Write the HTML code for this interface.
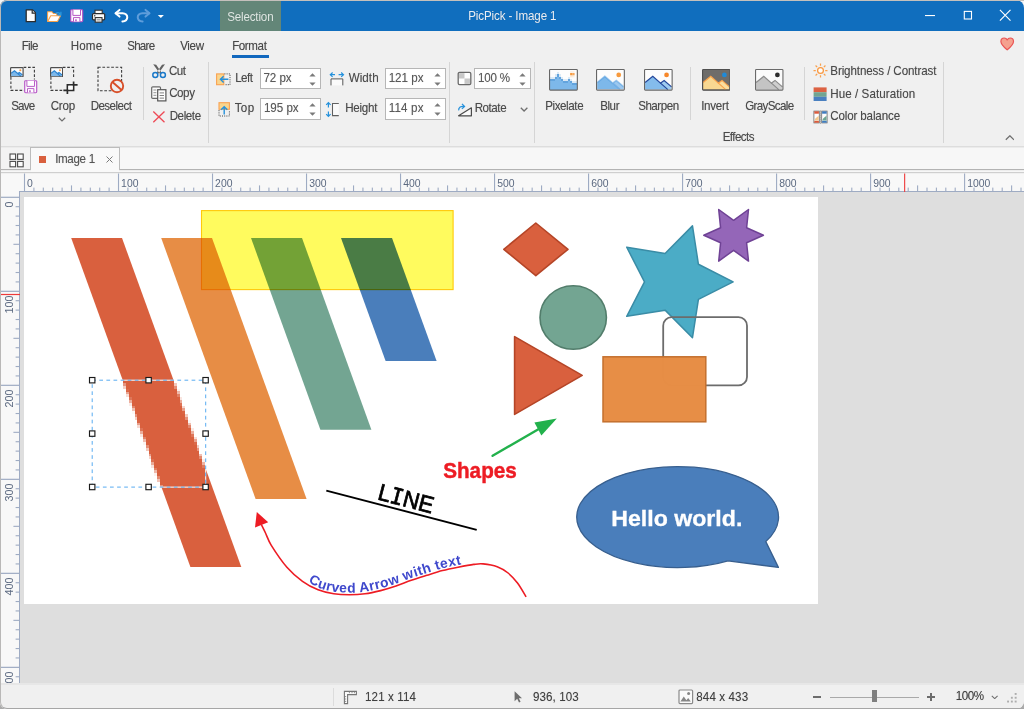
<!DOCTYPE html>
<html lang="en"><head><meta charset="utf-8"><title>PicPick - Image 1</title>
<style>
html,body{margin:0;padding:0}
body{width:1024px;height:709px;overflow:hidden;background:linear-gradient(#f6f6f6 0,#f6f6f6 50%,#ababab 50%,#ababab 100%);position:relative;font-family:"Liberation Sans",sans-serif}
#win{position:absolute;left:0;top:0;width:1024px;height:709px;overflow:hidden;border-radius:7px 8px 8px 7px;background:#f0f0f0}
#win>div,#win>svg,#win>span{position:absolute;display:block}
#win>span{white-space:pre;line-height:16px;text-shadow:0 0 0.7px rgba(80,80,80,0.45)}
#frame{position:absolute;left:0;top:0;width:1030px;height:707px;border:1px solid #b9b8b7;border-top-color:#c4c0bc;border-bottom-color:#a6a6a6;border-radius:7px;pointer-events:none}
</style></head>
<body>
<div id="win">
<div style="left:0px;top:0px;width:1024px;height:31px;background:#106ebe;"></div>
<div style="left:220px;top:1px;width:61px;height:30px;background:#638678;"></div>
<div style="left:0px;top:31px;width:1024px;height:116px;background:#f0f0f0;"></div>
<div style="left:232px;top:55px;width:37px;height:3px;background:#1268be;"></div>
<div style="left:208px;top:62px;width:1px;height:81px;background:#d5d5d5;"></div>
<div style="left:449px;top:62px;width:1px;height:81px;background:#d5d5d5;"></div>
<div style="left:533.6px;top:62px;width:1px;height:81px;background:#d5d5d5;"></div>
<div style="left:943px;top:62px;width:1px;height:81px;background:#d5d5d5;"></div>
<div style="left:143px;top:67px;width:1px;height:53px;background:#d5d5d5;"></div>
<div style="left:689.6px;top:67px;width:1px;height:53px;background:#d5d5d5;"></div>
<div style="left:804px;top:67px;width:1px;height:53px;background:#d5d5d5;"></div>
<div style="left:260.2px;top:67.9px;width:60.4px;height:21.6px;background:#fff;border:1px solid #b6b6b6;box-sizing:border-box;"></div>
<svg style="left:307.99999999999994px;top:71.5px;" width="9" height="15" viewBox="0 0 9 15"><path d="M1.4 4.4 L4.5 1.3 L7.6 4.4 Z M1.4 10.6 L4.5 13.7 L7.6 10.6 Z" fill="#7a7a7a"/></svg>
<div style="left:260.2px;top:98.2px;width:60.4px;height:21.6px;background:#fff;border:1px solid #b6b6b6;box-sizing:border-box;"></div>
<svg style="left:307.99999999999994px;top:101.8px;" width="9" height="15" viewBox="0 0 9 15"><path d="M1.4 4.4 L4.5 1.3 L7.6 4.4 Z M1.4 10.6 L4.5 13.7 L7.6 10.6 Z" fill="#7a7a7a"/></svg>
<div style="left:385.2px;top:67.9px;width:60.6px;height:21.6px;background:#fff;border:1px solid #b6b6b6;box-sizing:border-box;"></div>
<svg style="left:433.2px;top:71.5px;" width="9" height="15" viewBox="0 0 9 15"><path d="M1.4 4.4 L4.5 1.3 L7.6 4.4 Z M1.4 10.6 L4.5 13.7 L7.6 10.6 Z" fill="#7a7a7a"/></svg>
<div style="left:385.2px;top:98.2px;width:60.6px;height:21.6px;background:#fff;border:1px solid #b6b6b6;box-sizing:border-box;"></div>
<svg style="left:433.2px;top:101.8px;" width="9" height="15" viewBox="0 0 9 15"><path d="M1.4 4.4 L4.5 1.3 L7.6 4.4 Z M1.4 10.6 L4.5 13.7 L7.6 10.6 Z" fill="#7a7a7a"/></svg>
<div style="left:474.4px;top:67.9px;width:56.3px;height:21.6px;background:#fff;border:1px solid #b6b6b6;box-sizing:border-box;"></div>
<svg style="left:518.0999999999999px;top:71.5px;" width="9" height="15" viewBox="0 0 9 15"><path d="M1.4 4.4 L4.5 1.3 L7.6 4.4 Z M1.4 10.6 L4.5 13.7 L7.6 10.6 Z" fill="#7a7a7a"/></svg>
<div style="left:0px;top:146px;width:1024px;height:1px;background:#dddddd;"></div>
<div style="left:0px;top:147px;width:1024px;height:26px;background:#f7f7f7;"></div>
<div style="left:0px;top:147px;width:1024px;height:1px;background:#ebebeb;"></div>
<div style="left:0px;top:169px;width:1024px;height:1px;background:#b3b3b3;"></div>
<div style="left:0px;top:170px;width:1024px;height:1px;background:#ededed;"></div>
<div style="left:0px;top:172px;width:1024px;height:1px;background:#cfcfcf;"></div>
<div style="left:1px;top:148px;width:29px;height:21px;background:#f3f3f3;"></div>
<div style="left:30px;top:147px;width:90px;height:23px;background:#f9f9f9;border:1px solid #bcbcbc;border-bottom:none;box-sizing:border-box;"></div>
<div style="left:31px;top:169px;width:88px;height:3px;background:#f9f9f9;"></div>
<div style="left:39.2px;top:155.7px;width:6.8px;height:6.9px;background:#d9603e;"></div>
<svg style="left:105px;top:155px;" width="9" height="9" viewBox="0 0 9 9"><path d="M1.5 1.5 L7.5 7.5 M7.5 1.5 L1.5 7.5" stroke="#7a7a7a" stroke-width="1" fill="none"/></svg>
<div style="left:0px;top:173.5px;width:1024px;height:511px;background:#dedede;"></div>
<div style="left:0px;top:173.5px;width:1024px;height:18.5px;background:#f8f8f8;"></div>
<div style="left:19.2px;top:190.9px;width:1005px;height:1.6px;background:#9eabc3;"></div>
<div style="left:0px;top:192px;width:20px;height:492px;background:#f8f8f8;"></div>
<div style="left:19.1px;top:192px;width:1.2px;height:492px;background:#9eabc3;"></div>
<svg style="left:0px;top:173px;" width="1024" height="20" viewBox="0 0 1024 20"><rect x="23.95" y="0.5" width="1.1" height="18.5" fill="#9eabc3"/><rect x="33.35" y="14.6" width="1.1" height="4" fill="#9eabc3"/><rect x="42.75" y="14.6" width="1.1" height="4" fill="#9eabc3"/><rect x="52.15" y="14.6" width="1.1" height="4" fill="#9eabc3"/><rect x="61.55" y="14.6" width="1.1" height="4" fill="#9eabc3"/><rect x="70.95" y="12.4" width="1.1" height="6" fill="#9eabc3"/><rect x="80.36" y="14.6" width="1.1" height="4" fill="#9eabc3"/><rect x="89.76" y="14.6" width="1.1" height="4" fill="#9eabc3"/><rect x="99.16" y="14.6" width="1.1" height="4" fill="#9eabc3"/><rect x="108.56" y="14.6" width="1.1" height="4" fill="#9eabc3"/><rect x="117.96" y="0.5" width="1.1" height="18.5" fill="#9eabc3"/><rect x="127.36" y="14.6" width="1.1" height="4" fill="#9eabc3"/><rect x="136.76" y="14.6" width="1.1" height="4" fill="#9eabc3"/><rect x="146.16" y="14.6" width="1.1" height="4" fill="#9eabc3"/><rect x="155.56" y="14.6" width="1.1" height="4" fill="#9eabc3"/><rect x="164.97" y="12.4" width="1.1" height="6" fill="#9eabc3"/><rect x="174.37" y="14.6" width="1.1" height="4" fill="#9eabc3"/><rect x="183.77" y="14.6" width="1.1" height="4" fill="#9eabc3"/><rect x="193.17" y="14.6" width="1.1" height="4" fill="#9eabc3"/><rect x="202.57" y="14.6" width="1.1" height="4" fill="#9eabc3"/><rect x="211.97" y="0.5" width="1.1" height="18.5" fill="#9eabc3"/><rect x="221.37" y="14.6" width="1.1" height="4" fill="#9eabc3"/><rect x="230.77" y="14.6" width="1.1" height="4" fill="#9eabc3"/><rect x="240.17" y="14.6" width="1.1" height="4" fill="#9eabc3"/><rect x="249.57" y="14.6" width="1.1" height="4" fill="#9eabc3"/><rect x="258.97" y="12.4" width="1.1" height="6" fill="#9eabc3"/><rect x="268.38" y="14.6" width="1.1" height="4" fill="#9eabc3"/><rect x="277.78" y="14.6" width="1.1" height="4" fill="#9eabc3"/><rect x="287.18" y="14.6" width="1.1" height="4" fill="#9eabc3"/><rect x="296.58" y="14.6" width="1.1" height="4" fill="#9eabc3"/><rect x="305.98" y="0.5" width="1.1" height="18.5" fill="#9eabc3"/><rect x="315.38" y="14.6" width="1.1" height="4" fill="#9eabc3"/><rect x="324.78" y="14.6" width="1.1" height="4" fill="#9eabc3"/><rect x="334.18" y="14.6" width="1.1" height="4" fill="#9eabc3"/><rect x="343.58" y="14.6" width="1.1" height="4" fill="#9eabc3"/><rect x="352.99" y="12.4" width="1.1" height="6" fill="#9eabc3"/><rect x="362.39" y="14.6" width="1.1" height="4" fill="#9eabc3"/><rect x="371.79" y="14.6" width="1.1" height="4" fill="#9eabc3"/><rect x="381.19" y="14.6" width="1.1" height="4" fill="#9eabc3"/><rect x="390.59" y="14.6" width="1.1" height="4" fill="#9eabc3"/><rect x="399.99" y="0.5" width="1.1" height="18.5" fill="#9eabc3"/><rect x="409.39" y="14.6" width="1.1" height="4" fill="#9eabc3"/><rect x="418.79" y="14.6" width="1.1" height="4" fill="#9eabc3"/><rect x="428.19" y="14.6" width="1.1" height="4" fill="#9eabc3"/><rect x="437.59" y="14.6" width="1.1" height="4" fill="#9eabc3"/><rect x="447.00" y="12.4" width="1.1" height="6" fill="#9eabc3"/><rect x="456.40" y="14.6" width="1.1" height="4" fill="#9eabc3"/><rect x="465.80" y="14.6" width="1.1" height="4" fill="#9eabc3"/><rect x="475.20" y="14.6" width="1.1" height="4" fill="#9eabc3"/><rect x="484.60" y="14.6" width="1.1" height="4" fill="#9eabc3"/><rect x="494.00" y="0.5" width="1.1" height="18.5" fill="#9eabc3"/><rect x="503.40" y="14.6" width="1.1" height="4" fill="#9eabc3"/><rect x="512.80" y="14.6" width="1.1" height="4" fill="#9eabc3"/><rect x="522.20" y="14.6" width="1.1" height="4" fill="#9eabc3"/><rect x="531.60" y="14.6" width="1.1" height="4" fill="#9eabc3"/><rect x="541.01" y="12.4" width="1.1" height="6" fill="#9eabc3"/><rect x="550.41" y="14.6" width="1.1" height="4" fill="#9eabc3"/><rect x="559.81" y="14.6" width="1.1" height="4" fill="#9eabc3"/><rect x="569.21" y="14.6" width="1.1" height="4" fill="#9eabc3"/><rect x="578.61" y="14.6" width="1.1" height="4" fill="#9eabc3"/><rect x="588.01" y="0.5" width="1.1" height="18.5" fill="#9eabc3"/><rect x="597.41" y="14.6" width="1.1" height="4" fill="#9eabc3"/><rect x="606.81" y="14.6" width="1.1" height="4" fill="#9eabc3"/><rect x="616.21" y="14.6" width="1.1" height="4" fill="#9eabc3"/><rect x="625.61" y="14.6" width="1.1" height="4" fill="#9eabc3"/><rect x="635.02" y="12.4" width="1.1" height="6" fill="#9eabc3"/><rect x="644.42" y="14.6" width="1.1" height="4" fill="#9eabc3"/><rect x="653.82" y="14.6" width="1.1" height="4" fill="#9eabc3"/><rect x="663.22" y="14.6" width="1.1" height="4" fill="#9eabc3"/><rect x="672.62" y="14.6" width="1.1" height="4" fill="#9eabc3"/><rect x="682.02" y="0.5" width="1.1" height="18.5" fill="#9eabc3"/><rect x="691.42" y="14.6" width="1.1" height="4" fill="#9eabc3"/><rect x="700.82" y="14.6" width="1.1" height="4" fill="#9eabc3"/><rect x="710.22" y="14.6" width="1.1" height="4" fill="#9eabc3"/><rect x="719.62" y="14.6" width="1.1" height="4" fill="#9eabc3"/><rect x="729.03" y="12.4" width="1.1" height="6" fill="#9eabc3"/><rect x="738.43" y="14.6" width="1.1" height="4" fill="#9eabc3"/><rect x="747.83" y="14.6" width="1.1" height="4" fill="#9eabc3"/><rect x="757.23" y="14.6" width="1.1" height="4" fill="#9eabc3"/><rect x="766.63" y="14.6" width="1.1" height="4" fill="#9eabc3"/><rect x="776.03" y="0.5" width="1.1" height="18.5" fill="#9eabc3"/><rect x="785.43" y="14.6" width="1.1" height="4" fill="#9eabc3"/><rect x="794.83" y="14.6" width="1.1" height="4" fill="#9eabc3"/><rect x="804.23" y="14.6" width="1.1" height="4" fill="#9eabc3"/><rect x="813.63" y="14.6" width="1.1" height="4" fill="#9eabc3"/><rect x="823.04" y="12.4" width="1.1" height="6" fill="#9eabc3"/><rect x="832.44" y="14.6" width="1.1" height="4" fill="#9eabc3"/><rect x="841.84" y="14.6" width="1.1" height="4" fill="#9eabc3"/><rect x="851.24" y="14.6" width="1.1" height="4" fill="#9eabc3"/><rect x="860.64" y="14.6" width="1.1" height="4" fill="#9eabc3"/><rect x="870.04" y="0.5" width="1.1" height="18.5" fill="#9eabc3"/><rect x="879.44" y="14.6" width="1.1" height="4" fill="#9eabc3"/><rect x="888.84" y="14.6" width="1.1" height="4" fill="#9eabc3"/><rect x="898.24" y="14.6" width="1.1" height="4" fill="#9eabc3"/><rect x="907.64" y="14.6" width="1.1" height="4" fill="#9eabc3"/><rect x="917.05" y="12.4" width="1.1" height="6" fill="#9eabc3"/><rect x="926.45" y="14.6" width="1.1" height="4" fill="#9eabc3"/><rect x="935.85" y="14.6" width="1.1" height="4" fill="#9eabc3"/><rect x="945.25" y="14.6" width="1.1" height="4" fill="#9eabc3"/><rect x="954.65" y="14.6" width="1.1" height="4" fill="#9eabc3"/><rect x="964.05" y="0.5" width="1.1" height="18.5" fill="#9eabc3"/><rect x="973.45" y="14.6" width="1.1" height="4" fill="#9eabc3"/><rect x="982.85" y="14.6" width="1.1" height="4" fill="#9eabc3"/><rect x="992.25" y="14.6" width="1.1" height="4" fill="#9eabc3"/><rect x="1001.65" y="14.6" width="1.1" height="4" fill="#9eabc3"/><rect x="1011.06" y="12.4" width="1.1" height="6" fill="#9eabc3"/><rect x="1020.46" y="14.6" width="1.1" height="4" fill="#9eabc3"/><g font-family="Liberation Sans, sans-serif" font-size="10.4" fill="#5b6980"><text x="27.10" y="13.6">0</text><text x="121.11" y="13.6">100</text><text x="215.12" y="13.6">200</text><text x="309.13" y="13.6">300</text><text x="403.14" y="13.6">400</text><text x="497.15" y="13.6">500</text><text x="591.16" y="13.6">600</text><text x="685.17" y="13.6">700</text><text x="779.18" y="13.6">800</text><text x="873.19" y="13.6">900</text><text x="967.20" y="13.6">1000</text></g><rect x="904.1" y="0.5" width="1.1" height="18.5" fill="#ee3a3a"/></svg>
<svg style="left:0px;top:192px;" width="20" height="492" viewBox="0 0 20 492"><rect x="1" y="4.70" width="19" height="1.2" fill="#9eabc3"/><rect x="15.6" y="14.15" width="4" height="1.1" fill="#9eabc3"/><rect x="15.6" y="23.55" width="4" height="1.1" fill="#9eabc3"/><rect x="15.6" y="32.95" width="4" height="1.1" fill="#9eabc3"/><rect x="15.6" y="42.35" width="4" height="1.1" fill="#9eabc3"/><rect x="13.4" y="51.76" width="6" height="1.1" fill="#9eabc3"/><rect x="15.6" y="61.16" width="4" height="1.1" fill="#9eabc3"/><rect x="15.6" y="70.56" width="4" height="1.1" fill="#9eabc3"/><rect x="15.6" y="79.96" width="4" height="1.1" fill="#9eabc3"/><rect x="15.6" y="89.36" width="4" height="1.1" fill="#9eabc3"/><rect x="1" y="98.71" width="19" height="1.2" fill="#9eabc3"/><rect x="15.6" y="108.16" width="4" height="1.1" fill="#9eabc3"/><rect x="15.6" y="117.56" width="4" height="1.1" fill="#9eabc3"/><rect x="15.6" y="126.96" width="4" height="1.1" fill="#9eabc3"/><rect x="15.6" y="136.36" width="4" height="1.1" fill="#9eabc3"/><rect x="13.4" y="145.77" width="6" height="1.1" fill="#9eabc3"/><rect x="15.6" y="155.17" width="4" height="1.1" fill="#9eabc3"/><rect x="15.6" y="164.57" width="4" height="1.1" fill="#9eabc3"/><rect x="15.6" y="173.97" width="4" height="1.1" fill="#9eabc3"/><rect x="15.6" y="183.37" width="4" height="1.1" fill="#9eabc3"/><rect x="1" y="192.72" width="19" height="1.2" fill="#9eabc3"/><rect x="15.6" y="202.17" width="4" height="1.1" fill="#9eabc3"/><rect x="15.6" y="211.57" width="4" height="1.1" fill="#9eabc3"/><rect x="15.6" y="220.97" width="4" height="1.1" fill="#9eabc3"/><rect x="15.6" y="230.37" width="4" height="1.1" fill="#9eabc3"/><rect x="13.4" y="239.78" width="6" height="1.1" fill="#9eabc3"/><rect x="15.6" y="249.18" width="4" height="1.1" fill="#9eabc3"/><rect x="15.6" y="258.58" width="4" height="1.1" fill="#9eabc3"/><rect x="15.6" y="267.98" width="4" height="1.1" fill="#9eabc3"/><rect x="15.6" y="277.38" width="4" height="1.1" fill="#9eabc3"/><rect x="1" y="286.73" width="19" height="1.2" fill="#9eabc3"/><rect x="15.6" y="296.18" width="4" height="1.1" fill="#9eabc3"/><rect x="15.6" y="305.58" width="4" height="1.1" fill="#9eabc3"/><rect x="15.6" y="314.98" width="4" height="1.1" fill="#9eabc3"/><rect x="15.6" y="324.38" width="4" height="1.1" fill="#9eabc3"/><rect x="13.4" y="333.79" width="6" height="1.1" fill="#9eabc3"/><rect x="15.6" y="343.19" width="4" height="1.1" fill="#9eabc3"/><rect x="15.6" y="352.59" width="4" height="1.1" fill="#9eabc3"/><rect x="15.6" y="361.99" width="4" height="1.1" fill="#9eabc3"/><rect x="15.6" y="371.39" width="4" height="1.1" fill="#9eabc3"/><rect x="1" y="380.74" width="19" height="1.2" fill="#9eabc3"/><rect x="15.6" y="390.19" width="4" height="1.1" fill="#9eabc3"/><rect x="15.6" y="399.59" width="4" height="1.1" fill="#9eabc3"/><rect x="15.6" y="408.99" width="4" height="1.1" fill="#9eabc3"/><rect x="15.6" y="418.39" width="4" height="1.1" fill="#9eabc3"/><rect x="13.4" y="427.80" width="6" height="1.1" fill="#9eabc3"/><rect x="15.6" y="437.20" width="4" height="1.1" fill="#9eabc3"/><rect x="15.6" y="446.60" width="4" height="1.1" fill="#9eabc3"/><rect x="15.6" y="456.00" width="4" height="1.1" fill="#9eabc3"/><rect x="15.6" y="465.40" width="4" height="1.1" fill="#9eabc3"/><rect x="1" y="474.75" width="19" height="1.2" fill="#9eabc3"/><rect x="15.6" y="484.20" width="4" height="1.1" fill="#9eabc3"/><g font-family="Liberation Sans, sans-serif" font-size="10.8" fill="#5b6980"><text transform="translate(13.2,9.40) rotate(-90)" text-anchor="end">0</text><text transform="translate(13.2,103.41) rotate(-90)" text-anchor="end">100</text><text transform="translate(13.2,197.42) rotate(-90)" text-anchor="end">200</text><text transform="translate(13.2,291.43) rotate(-90)" text-anchor="end">300</text><text transform="translate(13.2,385.44) rotate(-90)" text-anchor="end">400</text><text transform="translate(13.2,479.45) rotate(-90)" text-anchor="end">500</text></g><rect x="1" y="101.9" width="19" height="1.2" fill="#ee3a3a"/></svg>
<svg style="left:24px;top:8px;" width="14" height="16" viewBox="0 0 14 16"><path d="M2.2 1.9 H8.6 L11.4 4.8 V13.7 H2.2 Z" fill="#fcfcfc" stroke="#2d2d2d" stroke-width="1.3" stroke-linejoin="round"/><path d="M8.2 1.9 V5.2 H11.4" fill="#e8e8e8" stroke="#2d2d2d" stroke-width="1.2"/></svg>
<svg style="left:46px;top:9px;" width="17" height="15" viewBox="0 0 17 15"><path d="M1.6 12.5 V2.7 H5.8 L7.4 4.5 H10.8 V6.8" fill="#fffdfb" stroke="#f7a047" stroke-width="1.05" stroke-linejoin="round"/><path d="M1.7 12.5 L4.7 6.8 H14.5 L11.5 12.5 Z" fill="#fffefd" stroke="#f7a047" stroke-width="1.05" stroke-linejoin="round"/><path d="M9.6 4.7 C10.8 3.2 13.2 3.2 14.3 5.3" fill="none" stroke="#2d9be0" stroke-width="1.3"/><path d="M14.9 2.7 V5.9 H11.9" fill="none" stroke="#2d9be0" stroke-width="1.2"/></svg>
<svg style="left:69.6px;top:9.2px;" width="14.0" height="14.0" viewBox="0 0 14 14"><rect x="0.7" y="0.7" width="12" height="12" rx="0.9" fill="#fdf8fd" stroke="#b24fc2" stroke-width="1.15"/><path d="M2.9 0.8 V6.4 H10.5 V0.8" fill="#ffffff" stroke="#b24fc2" stroke-width="0.95"/><path d="M3.5 12.6 V8.6 H9.9 V12.6" fill="#ffffff" stroke="#b24fc2" stroke-width="0.95"/><rect x="5.2" y="10.3" width="1.5" height="2" fill="#b24fc2"/></svg>
<svg style="left:91px;top:9px;" width="16" height="15" viewBox="0 0 16 15"><rect x="4" y="1.2" width="7.2" height="4" fill="#fafafa" stroke="#333" stroke-width="1.1"/><rect x="1.5" y="4.6" width="12.2" height="6.2" rx="1" fill="#fcfcfc" stroke="#2e2e2e" stroke-width="1.2"/><rect x="4.2" y="8.6" width="6.8" height="4.6" fill="#f3f3f3" stroke="#333" stroke-width="1.1"/><rect x="5.6" y="10.2" width="4" height="0.9" fill="#999"/><rect x="5.6" y="11.6" width="4" height="0.8" fill="#999"/><rect x="3" y="6.2" width="1.4" height="1.2" fill="#333"/></svg>
<svg style="left:113px;top:8px;" width="17" height="17" viewBox="0 0 17 17"><path d="M6.5 1.9 L2.5 5.2 L6.5 8.6" fill="none" stroke="#fff" stroke-width="2" stroke-linecap="round" stroke-linejoin="round"/><path d="M2.8 5.2 H9.6 C15.8 5.2 15.9 13 9.4 13.5" fill="none" stroke="#fff" stroke-width="2" stroke-linecap="round"/></svg>
<svg style="left:134.8px;top:8px;" width="17" height="17" viewBox="0 0 17 17"><path d="M10.5 1.9 L14.5 5.2 L10.5 8.6" fill="none" stroke="#5e9ddb" stroke-width="2" stroke-linecap="round" stroke-linejoin="round"/><path d="M14.2 5.2 H7.4 C1.2 5.2 1.1 13 7.6 13.5" fill="none" stroke="#5e9ddb" stroke-width="2" stroke-linecap="round"/></svg>
<svg style="left:157px;top:14px;" width="8" height="5" viewBox="0 0 8 5"><path d="M0.8 0.9 H6.9 L3.85 3.9 Z" fill="#fff"/></svg>
<svg style="left:924px;top:14px;" width="12" height="3" viewBox="0 0 12 3"><rect x="1" y="1" width="10" height="1.1" fill="#fff"/></svg>
<svg style="left:962px;top:9px;" width="12" height="12" viewBox="0 0 12 12"><rect x="2.3" y="2.4" width="7.2" height="7.6" fill="none" stroke="#fff" stroke-width="1.1"/></svg>
<svg style="left:998px;top:8px;" width="14" height="14" viewBox="0 0 14 14"><path d="M1.9 1.8 L12.5 12.6 M12.5 1.8 L1.9 12.6" fill="none" stroke="#fff" stroke-width="1.15"/></svg>
<svg style="left:999px;top:36px;" width="17" height="16" viewBox="0 0 17 16"><path d="M8.2 13.9 C5.4 11.6 1.9 8.9 1.9 5.6 C1.9 3.4 3.4 2 5.2 2 C6.6 2 7.7 2.8 8.2 4 C8.7 2.8 9.8 2 11.2 2 C13 2 14.5 3.4 14.5 5.6 C14.5 8.9 11 11.6 8.2 13.9 Z" fill="#f5a18f" stroke="#ea5656" stroke-width="1.2" stroke-linejoin="round"/></svg>
<svg style="left:9px;top:65px;" width="30" height="30" viewBox="0 0 30 30"><path d="M14.6 2.4 H25.4 V14.6" fill="none" stroke="#3c3c3c" stroke-width="1.1" stroke-dasharray="2.7 1.7"/><path d="M1.9 12 V25.4 H15.4" fill="none" stroke="#3c3c3c" stroke-width="1.1" stroke-dasharray="2.7 1.7"/></svg>
<svg style="left:10px;top:66.7px;" width="13.7" height="10.4" viewBox="0 0 13.7 10.4"><rect x="0.6" y="0.6" width="12.5" height="9.200000000000001" rx="0.8" fill="#fdfdfd"/><g><path d="M1.20 6.32 L4.48 3.76 L10.92 9.20 L1.20 9.20 Z" fill="#7db8ea"/><path d="M7.53 6.72 L9.34 5.44 L12.50 8.08 L12.50 9.20 L10.47 9.20 Z" fill="#9cc8ef"/><path d="M1.20 6.32 L4.48 3.76 L10.92 9.20 M7.53 6.72 L9.34 5.44 L12.50 8.08" fill="none" stroke="#2f86d2" stroke-width="1.2" opacity="1"/><circle cx="10.35" cy="3.20" r="1.02" fill="#f79a3e"/></g><rect x="0.6" y="0.6" width="12.5" height="9.200000000000001" rx="0.8" fill="none" stroke="#4f4f4f" stroke-width="1.2"/></svg>
<svg style="left:24.3px;top:80.4px;" width="14.0" height="14.0" viewBox="0 0 14 14"><rect x="0.7" y="0.7" width="12" height="12" rx="0.9" fill="#fdf8fd" stroke="#b657c6" stroke-width="1.15"/><path d="M2.9 0.8 V6.4 H10.5 V0.8" fill="#ffffff" stroke="#b657c6" stroke-width="0.95"/><path d="M3.5 12.6 V8.6 H9.9 V12.6" fill="#ffffff" stroke="#b657c6" stroke-width="0.95"/><rect x="5.2" y="10.3" width="1.5" height="2" fill="#b657c6"/></svg>
<svg style="left:49px;top:65px;" width="30" height="31" viewBox="0 0 30 31"><path d="M13.8 2.4 H24.6 V13.6" fill="none" stroke="#3c3c3c" stroke-width="1.1" stroke-dasharray="2.7 1.7"/><path d="M1.9 12 V25.4 H15" fill="none" stroke="#3c3c3c" stroke-width="1.1" stroke-dasharray="2.7 1.7"/><path d="M14.4 25.4 H24.6 V16.6 M18.4 29 V19.8 H28.6" fill="none" stroke="#2c2c2c" stroke-width="1.7"/><rect x="19.3" y="20.7" width="4.4" height="3.9" fill="#fdfdfd"/></svg>
<svg style="left:49.8px;top:66.7px;" width="13.2" height="10.4" viewBox="0 0 13.2 10.4"><rect x="0.6" y="0.6" width="12.0" height="9.200000000000001" rx="0.8" fill="#fdfdfd"/><g><path d="M1.20 6.32 L4.33 3.76 L10.49 9.20 L1.20 9.20 Z" fill="#7db8ea"/><path d="M7.25 6.72 L8.98 5.44 L12.00 8.08 L12.00 9.20 L10.06 9.20 Z" fill="#9cc8ef"/><path d="M1.20 6.32 L4.33 3.76 L10.49 9.20 M7.25 6.72 L8.98 5.44 L12.00 8.08" fill="none" stroke="#2f86d2" stroke-width="1.2" opacity="1"/><circle cx="9.95" cy="3.20" r="0.97" fill="#f79a3e"/></g><rect x="0.6" y="0.6" width="12.0" height="9.200000000000001" rx="0.8" fill="none" stroke="#4f4f4f" stroke-width="1.2"/></svg>
<svg style="left:96px;top:65px;" width="30" height="30" viewBox="0 0 30 30"><rect x="2" y="2.3" width="23.6" height="23.4" fill="none" stroke="#3c3c3c" stroke-width="1.1" stroke-dasharray="2.7 1.7"/><circle cx="21" cy="21" r="6.2" fill="#f0f0f0" stroke="#d8502a" stroke-width="1.9"/><path d="M16.7 17.2 L25.3 24.8" stroke="#d8502a" stroke-width="1.9"/></svg>
<svg style="left:57.7px;top:116.9px;" width="8.0" height="4.9" viewBox="0 0 8.0 4.9"><path d="M0.8 0.8 L4.0 3.9 L7.2 0.8" fill="none" stroke="#6f6f6f" stroke-width="1.3"/></svg>
<svg style="left:520.2px;top:106.5px;" width="8.2" height="5.0" viewBox="0 0 8.2 5.0"><path d="M0.8 0.8 L4.1 4.0 L7.3999999999999995 0.8" fill="none" stroke="#6f6f6f" stroke-width="1.3"/></svg>
<svg style="left:1004.6px;top:135.2px;" width="9.799999999999999" height="5.800000000000001" viewBox="0 0 9.799999999999999 5.800000000000001"><path d="M0.8 4.8 L4.8999999999999995 0.8 L9.0 4.8" fill="none" stroke="#6f6f6f" stroke-width="1.3"/></svg>
<svg style="left:151px;top:63px;" width="16" height="16" viewBox="0 0 16 16"><path d="M2.2 1.2 L5.2 1.8 L10.5 9.5 L8.9 10.7 Z M14 1.2 L11 1.8 L5.7 9.5 L7.3 10.7 Z" fill="#626262"/><circle cx="4.3" cy="11.9" r="2.5" fill="#f0f0f0" stroke="#1b79c9" stroke-width="1.5"/><circle cx="11.9" cy="11.9" r="2.5" fill="#f0f0f0" stroke="#1b79c9" stroke-width="1.5"/></svg>
<svg style="left:150px;top:85px;" width="18" height="18" viewBox="0 0 18 18"><rect x="1.7" y="1.8" width="8.8" height="11.6" rx="1" fill="#fbfbfb" stroke="#696969" stroke-width="1.2"/><path d="M3.4 5 H6.4 M3.4 7.7 H6.4 M3.4 10.3 H6.4" stroke="#8a8a8a" stroke-width="0.9"/><rect x="7.7" y="4.7" width="8.2" height="11.2" fill="#fdfdfd" stroke="#555" stroke-width="1.2"/><path d="M9.6 7.9 H14 M9.6 10.5 H14 M9.6 13.1 H14" stroke="#808080" stroke-width="1"/></svg>
<svg style="left:152px;top:109.5px;" width="14" height="14" viewBox="0 0 14 14"><path d="M1.3 1.5 L12.5 12.3 M12.5 1.5 L1.3 12.3" fill="none" stroke="#ee4b57" stroke-width="1.35"/></svg>
<svg style="left:215px;top:71.5px;" width="17" height="15" viewBox="0 0 17 15"><rect x="1.6" y="1.9" width="7.2" height="10.8" fill="#f9d58d" stroke="#f9a252" stroke-width="1.1"/><path d="M9.4 1.9 H15 V12.7 H9.4" fill="none" stroke="#444" stroke-width="1" stroke-dasharray="1 1.2"/><path d="M13.4 7.3 H5.6 M8.6 4.2 L5.4 7.3 L8.6 10.4" fill="none" stroke="#2591dc" stroke-width="1.4"/></svg>
<svg style="left:216.5px;top:101px;" width="15" height="17" viewBox="0 0 15 17"><rect x="2" y="1.7" width="10.4" height="6.6" fill="#f9d58d" stroke="#f9a252" stroke-width="1.1"/><path d="M2 9.2 V15 H12.4 V9.2" fill="none" stroke="#444" stroke-width="1" stroke-dasharray="1 1.2"/><path d="M7.2 13.4 V6 M4.1 8.8 L7.2 5.7 L10.3 8.8" fill="none" stroke="#2591dc" stroke-width="1.4"/></svg>
<svg style="left:328.5px;top:71px;" width="16" height="16" viewBox="0 0 16 16"><path d="M1.4 3.7 H6 M3.6 1.5 L1.3 3.7 L3.6 5.9 M9.6 3.7 H14.4 M12.2 1.5 L14.5 3.7 L12.2 5.9" fill="none" stroke="#2591dc" stroke-width="1.2"/><path d="M2 14.4 V7.9 H13.8 V14.4" fill="#fafafa" stroke="#585858" stroke-width="1"/></svg>
<svg style="left:325px;top:100.5px;" width="16" height="17" viewBox="0 0 16 17"><path d="M3.4 1.6 V6.4 M1.2 3.8 L3.4 1.5 L5.6 3.8 M3.4 10.4 V15.4 M1.2 13.2 L3.4 15.5 L5.6 13.2" fill="none" stroke="#2591dc" stroke-width="1.2"/><path d="M13.8 2.4 H7.5 V14.6 H13.8" fill="#fafafa" stroke="#606060" stroke-width="1.05"/></svg>
<svg style="left:456.5px;top:71.3px;" width="15" height="15" viewBox="0 0 15 15"><rect x="1.2" y="1.3" width="12.6" height="12.4" rx="1.4" fill="#fff" stroke="#6a6a6a" stroke-width="1.3"/><rect x="2" y="2.1" width="5.5" height="5.4" fill="#c8c8c8"/><rect x="7.5" y="7.5" width="5.5" height="5.4" fill="#c8c8c8"/></svg>
<svg style="left:457px;top:102.5px;" width="16" height="14" viewBox="0 0 16 14"><path d="M1.6 12.8 H14.4 V4.8 Z" fill="#fafafa" stroke="#4a4a4a" stroke-width="1.2" stroke-linejoin="round"/><path d="M1.7 7.4 C1.3 4.2 4.2 2.9 7 3.4 M5 0.9 L7.5 3.4 L4.9 5.9" fill="none" stroke="#2591dc" stroke-width="1.3"/></svg>
<svg style="left:549.2px;top:69.2px;" width="28.9" height="21.7" viewBox="0 0 28.9 21.7"><rect x="0.55" y="0.55" width="27.799999999999997" height="20.599999999999998" rx="0.8" fill="#fdfdfd"/><path d="M1.10 20.60 L1.10 11.93 L3.32 11.93 L3.32 11.93 L5.55 11.93 L5.55 9.77 L7.77 9.77 L7.77 7.60 L10.00 7.60 L10.00 9.77 L12.22 9.77 L12.22 11.93 L14.45 11.93 L14.45 14.10 L16.67 14.10 L16.67 14.10 L18.90 14.10 L18.90 11.93 L21.12 11.93 L21.12 14.10 L23.35 14.10 L23.35 16.27 L25.57 16.27 L25.57 16.27 L27.80 16.27 L27.80 20.60 Z" fill="#7db8ea" shape-rendering="crispEdges"/><rect x="1.10" y="9.77" width="2.22" height="2.17" fill="#2f86d2" opacity="0.75" shape-rendering="crispEdges"/><rect x="1.10" y="7.60" width="2.22" height="2.17" fill="#2f86d2" opacity="0.16" shape-rendering="crispEdges"/><rect x="3.32" y="9.77" width="2.22" height="2.17" fill="#2f86d2" opacity="0.75" shape-rendering="crispEdges"/><rect x="3.32" y="7.60" width="2.22" height="2.17" fill="#2f86d2" opacity="0.16" shape-rendering="crispEdges"/><rect x="5.55" y="7.60" width="2.22" height="2.17" fill="#2f86d2" opacity="0.75" shape-rendering="crispEdges"/><rect x="5.55" y="5.43" width="2.22" height="2.17" fill="#2f86d2" opacity="0.16" shape-rendering="crispEdges"/><rect x="7.77" y="5.43" width="2.22" height="2.17" fill="#2f86d2" opacity="0.75" shape-rendering="crispEdges"/><rect x="7.77" y="3.27" width="2.22" height="2.17" fill="#2f86d2" opacity="0.16" shape-rendering="crispEdges"/><rect x="10.00" y="7.60" width="2.22" height="2.17" fill="#2f86d2" opacity="0.75" shape-rendering="crispEdges"/><rect x="10.00" y="5.43" width="2.22" height="2.17" fill="#2f86d2" opacity="0.16" shape-rendering="crispEdges"/><rect x="12.22" y="9.77" width="2.22" height="2.17" fill="#2f86d2" opacity="0.75" shape-rendering="crispEdges"/><rect x="12.22" y="7.60" width="2.22" height="2.17" fill="#2f86d2" opacity="0.16" shape-rendering="crispEdges"/><rect x="14.45" y="11.93" width="2.22" height="2.17" fill="#2f86d2" opacity="0.75" shape-rendering="crispEdges"/><rect x="14.45" y="9.77" width="2.22" height="2.17" fill="#2f86d2" opacity="0.16" shape-rendering="crispEdges"/><rect x="16.67" y="11.93" width="2.22" height="2.17" fill="#2f86d2" opacity="0.75" shape-rendering="crispEdges"/><rect x="16.67" y="9.77" width="2.22" height="2.17" fill="#2f86d2" opacity="0.16" shape-rendering="crispEdges"/><rect x="18.90" y="9.77" width="2.22" height="2.17" fill="#2f86d2" opacity="0.75" shape-rendering="crispEdges"/><rect x="18.90" y="7.60" width="2.22" height="2.17" fill="#2f86d2" opacity="0.16" shape-rendering="crispEdges"/><rect x="21.12" y="11.93" width="2.22" height="2.17" fill="#2f86d2" opacity="0.75" shape-rendering="crispEdges"/><rect x="21.12" y="9.77" width="2.22" height="2.17" fill="#2f86d2" opacity="0.16" shape-rendering="crispEdges"/><rect x="23.35" y="14.10" width="2.22" height="2.17" fill="#2f86d2" opacity="0.75" shape-rendering="crispEdges"/><rect x="23.35" y="11.93" width="2.22" height="2.17" fill="#2f86d2" opacity="0.16" shape-rendering="crispEdges"/><rect x="25.57" y="14.10" width="2.22" height="2.17" fill="#2f86d2" opacity="0.75" shape-rendering="crispEdges"/><rect x="25.57" y="11.93" width="2.22" height="2.17" fill="#2f86d2" opacity="0.16" shape-rendering="crispEdges"/><rect x="21.12" y="4.02" width="2.27" height="2.22" fill="#f79a3e" opacity="1"/><rect x="23.35" y="4.02" width="2.27" height="2.22" fill="#f79a3e" opacity="0.85"/><rect x="21.12" y="6.19" width="2.27" height="2.22" fill="#f79a3e" opacity="0.2"/><rect x="23.35" y="6.19" width="2.27" height="2.22" fill="#f79a3e" opacity="0.15"/><rect x="21.12" y="1.86" width="2.27" height="2.22" fill="#f79a3e" opacity="0.12"/><rect x="23.35" y="1.86" width="2.27" height="2.22" fill="#f79a3e" opacity="0.1"/><rect x="0.55" y="0.55" width="27.799999999999997" height="20.599999999999998" rx="0.8" fill="none" stroke="#666666" stroke-width="1.1"/></svg>
<svg style="left:596.3px;top:69.2px;" width="28.9" height="21.7" viewBox="0 0 28.9 21.7"><rect x="0.55" y="0.55" width="27.799999999999997" height="20.599999999999998" rx="0.8" fill="#fdfdfd"/><defs><filter id="bl" x="-10%" y="-10%" width="120%" height="120%"><feGaussianBlur stdDeviation="0.45"/></filter><clipPath id="blc"><rect x="1.1" y="1.1" width="26.699999999999996" height="19.499999999999996"/></clipPath></defs><g clip-path="url(#blc)"><g filter="url(#bl)"><path d="M1.10 13.58 L8.84 7.34 L24.06 20.60 L1.10 20.60 Z" fill="#7db8ea"/><path d="M16.05 14.55 L20.32 11.43 L27.80 17.87 L27.80 20.60 L22.99 20.60 Z" fill="#9cc8ef"/><path d="M1.10 13.58 L8.84 7.34 L24.06 20.60 M16.05 14.55 L20.32 11.43 L27.80 17.87" fill="none" stroke="#4a98dd" stroke-width="1.6" opacity="0.5"/><circle cx="22.73" cy="5.97" r="2.40" fill="#f79a3e"/></g></g><rect x="0.55" y="0.55" width="27.799999999999997" height="20.599999999999998" rx="0.8" fill="none" stroke="#666666" stroke-width="1.1"/></svg>
<svg style="left:644.2px;top:69.2px;" width="28.7" height="21.7" viewBox="0 0 28.7 21.7"><rect x="0.55" y="0.55" width="27.599999999999998" height="20.599999999999998" rx="0.8" fill="#fdfdfd"/><g><path d="M1.10 13.58 L8.78 7.34 L23.89 20.60 L1.10 20.60 Z" fill="#84bcec"/><path d="M15.94 14.55 L20.18 11.43 L27.60 17.87 L27.60 20.60 L22.83 20.60 Z" fill="#9fccf0"/><path d="M1.10 13.58 L8.78 7.34 L23.89 20.60 M15.94 14.55 L20.18 11.43 L27.60 17.87" fill="none" stroke="#24479b" stroke-width="1.2" opacity="1"/><circle cx="22.57" cy="5.97" r="2.38" fill="#f7882a"/></g><rect x="0.55" y="0.55" width="27.599999999999998" height="20.599999999999998" rx="0.8" fill="none" stroke="#666666" stroke-width="1.1"/></svg>
<svg style="left:701.8px;top:69.2px;" width="28.5" height="21.7" viewBox="0 0 28.5 21.7"><rect x="0.55" y="0.55" width="27.4" height="20.599999999999998" rx="0.8" fill="#6f6d6a"/><g><path d="M1.10 13.58 L8.73 7.34 L23.72 20.60 L1.10 20.60 Z" fill="#f8d891"/><path d="M15.83 14.55 L20.04 11.43 L27.40 17.87 L27.40 20.60 L22.67 20.60 Z" fill="#f9de9f"/><path d="M1.10 13.58 L8.73 7.34 L23.72 20.60 M15.83 14.55 L20.04 11.43 L27.40 17.87" fill="none" stroke="#f9a24a" stroke-width="1.2" opacity="1"/><circle cx="22.40" cy="5.97" r="2.37" fill="#1f8ad8"/></g><rect x="0.55" y="0.55" width="27.4" height="20.599999999999998" rx="0.8" fill="none" stroke="#4f4f4f" stroke-width="1.1"/></svg>
<svg style="left:755.2px;top:69.2px;" width="28.5" height="21.7" viewBox="0 0 28.5 21.7"><rect x="0.55" y="0.55" width="27.4" height="20.599999999999998" rx="0.8" fill="#fbfbfb"/><g><path d="M1.10 13.58 L8.73 7.34 L23.72 20.60 L1.10 20.60 Z" fill="#c4c4c4"/><path d="M15.83 14.55 L20.04 11.43 L27.40 17.87 L27.40 20.60 L22.67 20.60 Z" fill="#cfcfcf"/><path d="M1.10 13.58 L8.73 7.34 L23.72 20.60 M15.83 14.55 L20.04 11.43 L27.40 17.87" fill="none" stroke="#8c8c8c" stroke-width="1.2" opacity="1"/><circle cx="22.40" cy="5.97" r="2.37" fill="#2e2e2e"/></g><rect x="0.55" y="0.55" width="27.4" height="20.599999999999998" rx="0.8" fill="none" stroke="#6a6a6a" stroke-width="1.1"/></svg>
<svg style="left:812.6px;top:63.4px;" width="15" height="15" viewBox="0 0 15 15"><circle cx="7.5" cy="7.5" r="2.9" fill="#fffdf9" stroke="#f9973f" stroke-width="1.25"/><g stroke="#f9a04c" stroke-width="1.25"><line x1="12.20" y1="7.50" x2="14.50" y2="7.50"/><line x1="10.82" y1="10.82" x2="12.45" y2="12.45"/><line x1="7.50" y1="12.20" x2="7.50" y2="14.50"/><line x1="4.18" y1="10.82" x2="2.55" y2="12.45"/><line x1="2.80" y1="7.50" x2="0.50" y2="7.50"/><line x1="4.18" y1="4.18" x2="2.55" y2="2.55"/><line x1="7.50" y1="2.80" x2="7.50" y2="0.50"/><line x1="10.82" y1="4.18" x2="12.45" y2="2.55"/></g></svg>
<svg style="left:813px;top:87px;" width="14" height="15" viewBox="0 0 14 15"><rect x="0.6" y="0.4" width="13" height="4.8" fill="#dc6243"/><rect x="0.6" y="5.2" width="13" height="4.6" fill="#72a591"/><rect x="0.6" y="9.8" width="13" height="4.2" fill="#4a80c0"/></svg>
<svg style="left:812.5px;top:109.5px;" width="15" height="14" viewBox="0 0 15 14"><rect x="0.9" y="1.1" width="5.4" height="11.8" fill="#fdfdfd" stroke="#6a6a6a" stroke-width="0.8"/><rect x="1.3" y="1.3" width="4.6" height="2.4" fill="#dc5a3c"/><rect x="1.3" y="10.8" width="4.6" height="1.9" fill="#dc5a3c"/><path d="M1.5 10.6 C2.2 7.4 4 7.4 5.7 5.4 V10.6 Z" fill="#f4c88c"/><rect x="8.7" y="1.1" width="5.4" height="11.8" fill="#fdfdfd" stroke="#6a6a6a" stroke-width="0.8"/><rect x="9.1" y="1.3" width="4.6" height="2.4" fill="#3f7cc0"/><rect x="9.1" y="10.8" width="4.6" height="1.9" fill="#3f7cc0"/><path d="M9.3 10.6 C10 7.4 11.8 7.4 13.5 5.4 V10.6 Z" fill="#6fa692"/><path d="M7.5 0.6 V13.6" stroke="#666" stroke-width="0.8" stroke-dasharray="1 1"/></svg>
<svg style="left:8.5px;top:152.5px;" width="16" height="16" viewBox="0 0 16 16"><g fill="#fcfcfc" stroke="#4b4b4b" stroke-width="1.1"><rect x="1" y="1" width="5.6" height="5.4"/><rect x="8.6" y="1" width="5.6" height="5.4"/><rect x="1" y="8.4" width="5.6" height="5.4"/><rect x="8.6" y="8.4" width="5.6" height="5.4"/></g></svg>
<div style="left:24px;top:197px;width:793.6px;height:407px;background:#fff;"></div>
<svg style="left:0;top:0" width="1024" height="709" viewBox="0 0 1024 709"><defs><path id="tp" d="M303.79 579.52 C306.31 580.89 313.86 585.74 318.92 587.76 C323.98 589.78 329.07 590.82 334.15 591.63 C339.23 592.43 344.31 592.60 349.40 592.60 C354.49 592.60 359.60 592.31 364.71 591.62 C369.82 590.93 374.96 589.75 380.06 588.47 C385.16 587.18 390.21 585.62 395.30 583.91 C400.39 582.21 405.42 580.01 410.58 578.22 C415.74 576.44 421.02 574.82 426.25 573.20 C431.47 571.57 436.71 569.83 441.95 568.47 C447.18 567.11 452.41 566.08 457.67 565.04 C462.93 564.00 469.24 562.77 473.51 562.22 C477.79 561.66 479.24 561.31 483.32 561.71 C487.39 562.11 493.59 563.04 497.95 564.63 C502.31 566.23 505.93 568.43 509.48 571.29 C513.03 574.15 516.18 577.70 519.26 581.78 C522.34 585.85 526.52 593.41 527.97 595.74"/></defs><polygon points="71.2,238 122,238 241.3,567 190.4,567" fill="#d9603e"/><polygon points="161.2,238 212,238 306.6,499 255.6,499" fill="#e78d45"/><polygon points="251,238 302,238 371.4,429.8 320.4,429.8" fill="#73a592"/><polygon points="341,238 392,238 436.6,361 385.6,361" fill="#4a7ebb"/><rect x="201.5" y="210.6" width="251.6" height="79" fill="#fffb5e" stroke="#ffc90a" stroke-width="1.1" style="mix-blend-mode:multiply"/><polygon points="535.8,223 568,249.3 535.8,275.6 503.8,249.3" fill="#d9603e" stroke="#b54527" stroke-width="1.6" stroke-linejoin="round"/><ellipse cx="573.2" cy="317.5" rx="33.2" ry="31.8" fill="#73a592" stroke="#527d6b" stroke-width="1.6"/><polygon points="514.6,336.6 514.6,414.4 582.2,375.4" fill="#d9603e" stroke="#b54527" stroke-width="1.6" stroke-linejoin="round"/><polygon points="733.10,281.80 698.41,299.32 692.47,337.72 665.09,310.14 626.73,316.36 644.50,281.80 626.73,247.24 665.09,253.46 692.47,225.88 698.41,264.28" fill="#4bacc6" stroke="#3a8ca6" stroke-width="1.5" stroke-linejoin="round"/><polygon points="763.40,235.30 746.59,242.80 748.50,261.11 733.60,250.30 718.70,261.11 720.61,242.80 703.80,235.30 720.61,227.80 718.70,209.49 733.60,220.30 748.50,209.49 746.59,227.80" fill="#9466b8" stroke="#6f4295" stroke-width="1.5" stroke-linejoin="round"/><rect x="663.2" y="317.2" width="83.8" height="68.2" rx="8.5" fill="none" stroke="#6c6c6c" stroke-width="1.8"/><rect x="603" y="356.8" width="102.8" height="65" fill="#e78d45" fill-opacity="0.992" stroke="#c4702e" stroke-width="1.5"/><path d="M492.6 455.8 L544 426" stroke="#22b14c" stroke-width="2.4" stroke-linecap="round" fill="none"/><polygon points="556.8,418.4 534.4,422.6 541.4,435.4" fill="#22b14c"/><text x="443.2" y="477.6" font-family="Liberation Sans, sans-serif" font-weight="700" font-size="22.4" fill="#ed1c24" stroke="#ed1c24" stroke-width="0.45" textLength="73.6" lengthAdjust="spacingAndGlyphs">Shapes</text><path d="M326.3 490.6 L476.7 529.8" stroke="#000" stroke-width="1.9" fill="none"/><text transform="translate(376.8,499.3) rotate(14.6)" font-family="Liberation Sans, sans-serif" font-size="23.4" fill="#000" stroke="#000" stroke-width="0.75" stroke-linejoin="round" textLength="56.6" lengthAdjust="spacingAndGlyphs">L<tspan font-family="DejaVu Sans Mono, monospace" font-size="22.6">I</tspan>NE</text><path d="M261.30 524.50 C262.00 525.92 263.83 529.53 265.50 533.00 C267.17 536.47 267.73 539.60 271.30 545.30 C274.87 551.00 281.70 561.20 286.90 567.20 C292.10 573.20 297.30 577.53 302.50 581.30 C307.70 585.07 312.88 587.72 318.10 589.80 C323.32 591.88 328.58 592.97 333.80 593.80 C339.02 594.63 344.20 594.80 349.40 594.80 C354.60 594.80 359.80 594.50 365.00 593.80 C370.20 593.10 375.43 591.90 380.60 590.60 C385.77 589.30 390.88 587.72 396.00 586.00 C401.12 584.28 406.15 582.08 411.30 580.30 C416.45 578.52 421.70 576.92 426.90 575.30 C432.10 573.68 437.30 571.95 442.50 570.60 C447.70 569.25 452.88 568.23 458.10 567.20 C463.32 566.17 469.63 564.95 473.80 564.40 C477.97 563.85 479.20 563.52 483.10 563.90 C487.00 564.28 493.03 565.18 497.20 566.70 C501.37 568.22 504.72 570.27 508.10 573.00 C511.48 575.73 514.50 579.12 517.50 583.10 C520.50 587.08 524.67 594.60 526.10 596.90" stroke="#ed1c24" stroke-width="1.6" fill="none"/><polygon points="256.8,512 255,527.4 268.2,522.2" fill="#ed1c24"/><text font-family="Liberation Sans, sans-serif" font-weight="700" font-size="13.8" fill="#3f48cc"><textPath href="#tp" startOffset="4.8" textLength="159.5" lengthAdjust="spacing">Curved Arrow with text</textPath></text><path d="M765.8 541.6 A100.9 50.5 0 1 0 728 560.8 L778.4 567.4 Z" fill="#4a7ebb" stroke="#385f8e" stroke-width="1.3" stroke-linejoin="round"/><text x="611.2" y="525.6" font-family="Liberation Sans, sans-serif" font-weight="700" font-size="22.8" fill="#fff" stroke="#fff" stroke-width="0.3" textLength="131.2" lengthAdjust="spacingAndGlyphs">Hello world.</text><rect x="92.2" y="380.2" width="113.5" height="106.9" fill="#fff"/><g fill="#d9603e" shape-rendering="crispEdges"><rect x="171.16" y="380.20" width="2.86" height="2.86" opacity="0.99"/><rect x="123.22" y="380.20" width="47.98" height="2.86"/><rect x="123.22" y="383.02" width="2.86" height="2.86" opacity="0.67"/><rect x="173.98" y="383.02" width="2.86" height="2.86" opacity="0.35"/><rect x="126.04" y="383.02" width="47.98" height="2.86"/><rect x="123.22" y="385.84" width="2.86" height="2.86" opacity="0.30"/><rect x="173.98" y="385.84" width="2.86" height="2.86" opacity="0.71"/><rect x="126.04" y="385.84" width="47.98" height="2.86"/><rect x="126.04" y="388.66" width="2.86" height="2.86" opacity="0.94"/><rect x="176.80" y="388.66" width="2.86" height="2.86" opacity="0.07"/><rect x="128.86" y="388.66" width="47.98" height="2.86"/><rect x="126.04" y="391.48" width="2.86" height="2.86" opacity="0.58"/><rect x="176.80" y="391.48" width="2.86" height="2.86" opacity="0.43"/><rect x="128.86" y="391.48" width="47.98" height="2.86"/><rect x="126.04" y="394.30" width="2.86" height="2.86" opacity="0.22"/><rect x="176.80" y="394.30" width="2.86" height="2.86" opacity="0.80"/><rect x="128.86" y="394.30" width="47.98" height="2.86"/><rect x="128.86" y="397.12" width="2.86" height="2.86" opacity="0.86"/><rect x="179.62" y="397.12" width="2.86" height="2.86" opacity="0.16"/><rect x="131.68" y="397.12" width="47.98" height="2.86"/><rect x="128.86" y="399.94" width="2.86" height="2.86" opacity="0.50"/><rect x="179.62" y="399.94" width="2.86" height="2.86" opacity="0.52"/><rect x="131.68" y="399.94" width="47.98" height="2.86"/><rect x="128.86" y="402.76" width="2.86" height="2.86" opacity="0.13"/><rect x="179.62" y="402.76" width="2.86" height="2.86" opacity="0.88"/><rect x="131.68" y="402.76" width="47.98" height="2.86"/><rect x="131.68" y="405.58" width="2.86" height="2.86" opacity="0.77"/><rect x="182.44" y="405.58" width="2.86" height="2.86" opacity="0.24"/><rect x="134.50" y="405.58" width="47.98" height="2.86"/><rect x="131.68" y="408.40" width="2.86" height="2.86" opacity="0.41"/><rect x="182.44" y="408.40" width="2.86" height="2.86" opacity="0.60"/><rect x="134.50" y="408.40" width="47.98" height="2.86"/><rect x="131.68" y="411.22" width="2.86" height="2.86" opacity="0.05"/><rect x="182.44" y="411.22" width="2.86" height="2.86" opacity="0.97"/><rect x="134.50" y="411.22" width="47.98" height="2.86"/><rect x="134.50" y="414.04" width="2.86" height="2.86" opacity="0.69"/><rect x="185.26" y="414.04" width="2.86" height="2.86" opacity="0.33"/><rect x="137.32" y="414.04" width="47.98" height="2.86"/><rect x="134.50" y="416.86" width="2.86" height="2.86" opacity="0.32"/><rect x="185.26" y="416.86" width="2.86" height="2.86" opacity="0.69"/><rect x="137.32" y="416.86" width="47.98" height="2.86"/><rect x="137.32" y="419.68" width="2.86" height="2.86" opacity="0.96"/><rect x="188.08" y="419.68" width="2.86" height="2.86" opacity="0.05"/><rect x="140.14" y="419.68" width="47.98" height="2.86"/><rect x="137.32" y="422.50" width="2.86" height="2.86" opacity="0.60"/><rect x="188.08" y="422.50" width="2.86" height="2.86" opacity="0.41"/><rect x="140.14" y="422.50" width="47.98" height="2.86"/><rect x="137.32" y="425.32" width="2.86" height="2.86" opacity="0.24"/><rect x="188.08" y="425.32" width="2.86" height="2.86" opacity="0.77"/><rect x="140.14" y="425.32" width="47.98" height="2.86"/><rect x="140.14" y="428.14" width="2.86" height="2.86" opacity="0.88"/><rect x="190.90" y="428.14" width="2.86" height="2.86" opacity="0.14"/><rect x="142.96" y="428.14" width="47.98" height="2.86"/><rect x="140.14" y="430.96" width="2.86" height="2.86" opacity="0.52"/><rect x="190.90" y="430.96" width="2.86" height="2.86" opacity="0.50"/><rect x="142.96" y="430.96" width="47.98" height="2.86"/><rect x="140.14" y="433.78" width="2.86" height="2.86" opacity="0.15"/><rect x="190.90" y="433.78" width="2.86" height="2.86" opacity="0.86"/><rect x="142.96" y="433.78" width="47.98" height="2.86"/><rect x="142.96" y="436.60" width="2.86" height="2.86" opacity="0.79"/><rect x="193.72" y="436.60" width="2.86" height="2.86" opacity="0.22"/><rect x="145.78" y="436.60" width="47.98" height="2.86"/><rect x="142.96" y="439.42" width="2.86" height="2.86" opacity="0.43"/><rect x="193.72" y="439.42" width="2.86" height="2.86" opacity="0.58"/><rect x="145.78" y="439.42" width="47.98" height="2.86"/><rect x="142.96" y="442.24" width="2.86" height="2.86" opacity="0.07"/><rect x="193.72" y="442.24" width="2.86" height="2.86" opacity="0.94"/><rect x="145.78" y="442.24" width="47.98" height="2.86"/><rect x="145.78" y="445.06" width="2.86" height="2.86" opacity="0.71"/><rect x="196.54" y="445.06" width="2.86" height="2.86" opacity="0.31"/><rect x="148.60" y="445.06" width="47.98" height="2.86"/><rect x="145.78" y="447.88" width="2.86" height="2.86" opacity="0.35"/><rect x="196.54" y="447.88" width="2.86" height="2.86" opacity="0.67"/><rect x="148.60" y="447.88" width="47.98" height="2.86"/><rect x="148.60" y="450.70" width="2.86" height="2.86" opacity="0.98"/><rect x="151.42" y="450.70" width="47.98" height="2.86"/><rect x="148.60" y="453.52" width="2.86" height="2.86" opacity="0.62"/><rect x="199.36" y="453.52" width="2.86" height="2.86" opacity="0.39"/><rect x="151.42" y="453.52" width="47.98" height="2.86"/><rect x="148.60" y="456.34" width="2.86" height="2.86" opacity="0.26"/><rect x="199.36" y="456.34" width="2.86" height="2.86" opacity="0.75"/><rect x="151.42" y="456.34" width="47.98" height="2.86"/><rect x="151.42" y="459.16" width="2.86" height="2.86" opacity="0.90"/><rect x="202.18" y="459.16" width="2.86" height="2.86" opacity="0.11"/><rect x="154.24" y="459.16" width="47.98" height="2.86"/><rect x="151.42" y="461.98" width="2.86" height="2.86" opacity="0.54"/><rect x="202.18" y="461.98" width="2.86" height="2.86" opacity="0.48"/><rect x="154.24" y="461.98" width="47.98" height="2.86"/><rect x="151.42" y="464.80" width="2.86" height="2.86" opacity="0.18"/><rect x="202.18" y="464.80" width="2.86" height="2.86" opacity="0.84"/><rect x="154.24" y="464.80" width="47.98" height="2.86"/><rect x="154.24" y="467.62" width="2.86" height="2.86" opacity="0.81"/><rect x="205.00" y="467.62" width="0.74" height="2.86" opacity="0.81"/><rect x="157.06" y="467.62" width="47.98" height="2.86"/><rect x="154.24" y="470.44" width="2.86" height="2.86" opacity="0.45"/><rect x="157.06" y="470.44" width="48.68" height="2.86"/><rect x="154.24" y="473.26" width="2.86" height="2.86" opacity="0.09"/><rect x="157.06" y="473.26" width="48.68" height="2.86"/><rect x="157.06" y="476.08" width="2.86" height="2.86" opacity="0.73"/><rect x="159.88" y="476.08" width="45.86" height="2.86"/><rect x="157.06" y="478.90" width="2.86" height="2.86" opacity="0.37"/><rect x="159.88" y="478.90" width="45.86" height="2.86"/><rect x="159.88" y="481.72" width="45.86" height="2.86"/><rect x="159.88" y="484.54" width="2.86" height="2.60" opacity="0.66"/><rect x="162.70" y="484.54" width="43.04" height="2.60"/></g><rect x="92.2" y="380.2" width="113.5" height="106.9" fill="none" stroke="#fff" stroke-width="1"/><rect x="92.2" y="380.2" width="113.5" height="106.9" fill="none" stroke="#4fa6f0" stroke-width="0.95" stroke-dasharray="3.7 3.4"/><rect x="89.5" y="377.5" width="5.4" height="5.4" fill="#fff" stroke="#1a1a1a" stroke-width="1.15"/><rect x="89.5" y="430.9" width="5.4" height="5.4" fill="#fff" stroke="#1a1a1a" stroke-width="1.15"/><rect x="89.5" y="484.3" width="5.4" height="5.4" fill="#fff" stroke="#1a1a1a" stroke-width="1.15"/><rect x="145.9" y="377.5" width="5.4" height="5.4" fill="#fff" stroke="#1a1a1a" stroke-width="1.15"/><rect x="145.9" y="484.3" width="5.4" height="5.4" fill="#fff" stroke="#1a1a1a" stroke-width="1.15"/><rect x="202.9" y="377.5" width="5.4" height="5.4" fill="#fff" stroke="#1a1a1a" stroke-width="1.15"/><rect x="202.9" y="430.9" width="5.4" height="5.4" fill="#fff" stroke="#1a1a1a" stroke-width="1.15"/><rect x="202.9" y="484.3" width="5.4" height="5.4" fill="#fff" stroke="#1a1a1a" stroke-width="1.15"/></svg>
<div style="left:0px;top:683px;width:1024px;height:2.4px;background:#e7e7e7;"></div>
<div style="left:0px;top:685.2px;width:1024px;height:24px;background:#f0f0f0;"></div>
<div style="left:333.3px;top:687.5px;width:1px;height:18.5px;background:#dcdcdc;"></div>
<svg style="left:342.5px;top:689.5px;" width="15" height="15" viewBox="0 0 15 15"><path d="M1.4 13.6 V1.4 H13.4 V4.6 H4.6 V13.6 Z" fill="#fafafa" stroke="#767676" stroke-width="1.1"/><path d="M6.4 1.6 V3.2 M9 1.6 V3.2 M11.4 1.6 V3.2 M1.6 6.6 H3.2 M1.6 9 H3.2 M1.6 11.4 H3.2" stroke="#767676" stroke-width="0.8"/></svg>
<svg style="left:513px;top:690px;" width="11" height="14" viewBox="0 0 11 14"><path d="M1.6 1.2 V11.2 L4.2 8.8 L6 12.6 L7.6 11.8 L5.8 8.2 H9 Z" fill="#6e6e6e"/></svg>
<svg style="left:677.5px;top:688.7px;" width="16" height="16" viewBox="0 0 16 16"><rect x="1" y="1" width="13.6" height="13.6" rx="1" fill="#fafafa" stroke="#8a8a8a" stroke-width="1.2"/><path d="M2.4 12.6 L5.8 7.4 L8.4 11.2 L10.2 9 L12.8 12.6 Z" fill="#858585"/><circle cx="10.6" cy="4.6" r="1.5" fill="#858585"/></svg>
<div style="left:813.2px;top:696.2px;width:8px;height:1.5px;background:#6c6c6c;"></div>
<div style="left:829.5px;top:696.5px;width:89.5px;height:1px;background:#a9a9a9;"></div>
<div style="left:872.2px;top:690.3px;width:4.4px;height:12px;background:#7f7f7f;"></div>
<div style="left:927.2px;top:696.3px;width:7.6px;height:1.4px;background:#6c6c6c;"></div>
<div style="left:930.3px;top:693.2px;width:1.4px;height:7.6px;background:#6c6c6c;"></div>
<svg style="left:991.2px;top:694.6px;" width="7.4" height="4.6" viewBox="0 0 7.4 4.6"><path d="M0.8 0.8 L3.7 3.6 L6.6 0.8" fill="none" stroke="#6f6f6f" stroke-width="1.1"/></svg>
<svg style="left:1006px;top:691px;" width="13" height="14" viewBox="0 0 13 14"><g fill="#adadad"><rect x="8.7" y="2" width="1.9" height="1.9"/><rect x="4.9" y="5.8" width="1.9" height="1.9"/><rect x="8.7" y="5.8" width="1.9" height="1.9"/><rect x="1.1" y="9.6" width="1.9" height="1.9"/><rect x="4.9" y="9.6" width="1.9" height="1.9"/><rect x="8.7" y="9.6" width="1.9" height="1.9"/></g></svg>
<span style="left:227.15px;top:8.88px;font-size:11.6px;letter-spacing:-0.156px;color:#dfe9e4;font-weight:400;transform-origin:0 12.02px;transform:scaleY(1.06);">Selection</span>
<span style="left:468.25px;top:8.18px;font-size:11.6px;letter-spacing:-0.122px;color:#e6eef8;font-weight:400;transform-origin:0 12.02px;transform:scaleY(1.06);">PicPick - Image 1</span>
<span style="left:21.65px;top:38.28px;font-size:11.6px;letter-spacing:-0.644px;color:#484848;font-weight:400;transform-origin:0 12.02px;transform:scaleY(1.06);">File</span>
<span style="left:70.65px;top:38.28px;font-size:11.6px;letter-spacing:0.174px;color:#484848;font-weight:400;transform-origin:0 12.02px;transform:scaleY(1.06);">Home</span>
<span style="left:127.15px;top:38.28px;font-size:11.6px;letter-spacing:-0.747px;color:#484848;font-weight:400;transform-origin:0 12.02px;transform:scaleY(1.06);">Share</span>
<span style="left:180.15px;top:38.28px;font-size:11.6px;letter-spacing:-0.349px;color:#484848;font-weight:400;transform-origin:0 12.02px;transform:scaleY(1.06);">View</span>
<span style="left:232.15px;top:38.28px;font-size:11.6px;letter-spacing:-0.399px;color:#484848;font-weight:400;transform-origin:0 12.02px;transform:scaleY(1.06);">Format</span>
<span style="left:11.15px;top:97.78px;font-size:11.6px;letter-spacing:-0.826px;color:#4a4a4a;font-weight:400;transform-origin:0 12.02px;transform:scaleY(1.06);">Save</span>
<span style="left:50.65px;top:97.78px;font-size:11.6px;letter-spacing:-0.227px;color:#4a4a4a;font-weight:400;transform-origin:0 12.02px;transform:scaleY(1.06);">Crop</span>
<span style="left:90.65px;top:97.78px;font-size:11.6px;letter-spacing:-0.555px;color:#4a4a4a;font-weight:400;transform-origin:0 12.02px;transform:scaleY(1.06);">Deselect</span>
<span style="left:168.95px;top:62.78px;font-size:11.6px;letter-spacing:-0.460px;color:#4a4a4a;font-weight:400;transform-origin:0 12.02px;transform:scaleY(1.06);">Cut</span>
<span style="left:169.15px;top:84.98px;font-size:11.6px;letter-spacing:-0.423px;color:#4a4a4a;font-weight:400;transform-origin:0 12.02px;transform:scaleY(1.06);">Copy</span>
<span style="left:169.65px;top:107.68px;font-size:11.6px;letter-spacing:-0.413px;color:#4a4a4a;font-weight:400;transform-origin:0 12.02px;transform:scaleY(1.06);">Delete</span>
<span style="left:235.15px;top:70.38px;font-size:11.6px;letter-spacing:-0.539px;color:#4a4a4a;font-weight:400;transform-origin:0 12.02px;transform:scaleY(1.06);">Left</span>
<span style="left:234.65px;top:100.18px;font-size:11.6px;letter-spacing:0.378px;color:#4a4a4a;font-weight:400;transform-origin:0 12.02px;transform:scaleY(1.06);">Top</span>
<span style="left:348.65px;top:70.38px;font-size:11.6px;letter-spacing:0.078px;color:#4a4a4a;font-weight:400;transform-origin:0 12.02px;transform:scaleY(1.06);">Width</span>
<span style="left:345.15px;top:100.18px;font-size:11.6px;letter-spacing:-0.258px;color:#4a4a4a;font-weight:400;transform-origin:0 12.02px;transform:scaleY(1.06);">Height</span>
<span style="left:474.65px;top:100.18px;font-size:11.6px;letter-spacing:-0.442px;color:#4a4a4a;font-weight:400;transform-origin:0 12.02px;transform:scaleY(1.06);">Rotate</span>
<span style="left:545.15px;top:97.78px;font-size:11.6px;letter-spacing:-0.400px;color:#4a4a4a;font-weight:400;transform-origin:0 12.02px;transform:scaleY(1.06);">Pixelate</span>
<span style="left:600.15px;top:97.78px;font-size:11.6px;letter-spacing:-0.419px;color:#4a4a4a;font-weight:400;transform-origin:0 12.02px;transform:scaleY(1.06);">Blur</span>
<span style="left:638.15px;top:97.78px;font-size:11.6px;letter-spacing:-0.481px;color:#4a4a4a;font-weight:400;transform-origin:0 12.02px;transform:scaleY(1.06);">Sharpen</span>
<span style="left:701.15px;top:97.78px;font-size:11.6px;letter-spacing:-0.255px;color:#4a4a4a;font-weight:400;transform-origin:0 12.02px;transform:scaleY(1.06);">Invert</span>
<span style="left:745.15px;top:97.78px;font-size:11.6px;letter-spacing:-0.647px;color:#4a4a4a;font-weight:400;transform-origin:0 12.02px;transform:scaleY(1.06);">GrayScale</span>
<span style="left:722.65px;top:128.68px;font-size:11.6px;letter-spacing:-0.572px;color:#4a4a4a;font-weight:400;transform-origin:0 12.02px;transform:scaleY(1.06);">Effects</span>
<span style="left:830.25px;top:63.18px;font-size:11.6px;letter-spacing:-0.102px;color:#4a4a4a;font-weight:400;transform-origin:0 12.02px;transform:scaleY(1.06);">Brightness / Contrast</span>
<span style="left:830.25px;top:86.08px;font-size:11.6px;letter-spacing:0.071px;color:#4a4a4a;font-weight:400;transform-origin:0 12.02px;transform:scaleY(1.06);">Hue / Saturation</span>
<span style="left:830.15px;top:107.98px;font-size:11.6px;letter-spacing:-0.133px;color:#4a4a4a;font-weight:400;transform-origin:0 12.02px;transform:scaleY(1.06);">Color balance</span>
<span style="left:263.45px;top:69.78px;font-size:11.6px;letter-spacing:-0.041px;color:#5a5a5a;font-weight:400;transform-origin:0 12.02px;transform:scaleY(1.06);">72 px</span>
<span style="left:263.95px;top:100.08px;font-size:11.6px;letter-spacing:-0.023px;color:#5a5a5a;font-weight:400;transform-origin:0 12.02px;transform:scaleY(1.06);">195 px</span>
<span style="left:388.65px;top:69.78px;font-size:11.6px;letter-spacing:-0.003px;color:#5a5a5a;font-weight:400;transform-origin:0 12.02px;transform:scaleY(1.06);">121 px</span>
<span style="left:388.65px;top:100.08px;font-size:11.6px;letter-spacing:0.170px;color:#5a5a5a;font-weight:400;transform-origin:0 12.02px;transform:scaleY(1.06);">114 px</span>
<span style="left:477.95px;top:69.78px;font-size:11.6px;letter-spacing:-0.216px;color:#5a5a5a;font-weight:400;transform-origin:0 12.02px;transform:scaleY(1.06);">100 %</span>
<span style="left:55.15px;top:151.48px;font-size:11.6px;letter-spacing:-0.324px;color:#555;font-weight:400;transform-origin:0 12.02px;transform:scaleY(1.06);">Image 1</span>
<span style="left:365.05px;top:688.58px;font-size:11.6px;letter-spacing:0.098px;color:#3f3f3f;font-weight:400;transform-origin:0 12.02px;transform:scaleY(1.06);">121 x 114</span>
<span style="left:532.95px;top:688.58px;font-size:11.6px;letter-spacing:0.088px;color:#3f3f3f;font-weight:400;transform-origin:0 12.02px;transform:scaleY(1.06);">936, 103</span>
<span style="left:696.25px;top:688.58px;font-size:11.6px;letter-spacing:0.115px;color:#3f3f3f;font-weight:400;transform-origin:0 12.02px;transform:scaleY(1.06);">844 x 433</span>
<span style="left:955.65px;top:688.38px;font-size:11.6px;letter-spacing:-0.448px;color:#3f3f3f;font-weight:400;transform-origin:0 12.02px;transform:scaleY(1.06);">100%</span>
</div>
<div id="frame"></div>
</body></html>
